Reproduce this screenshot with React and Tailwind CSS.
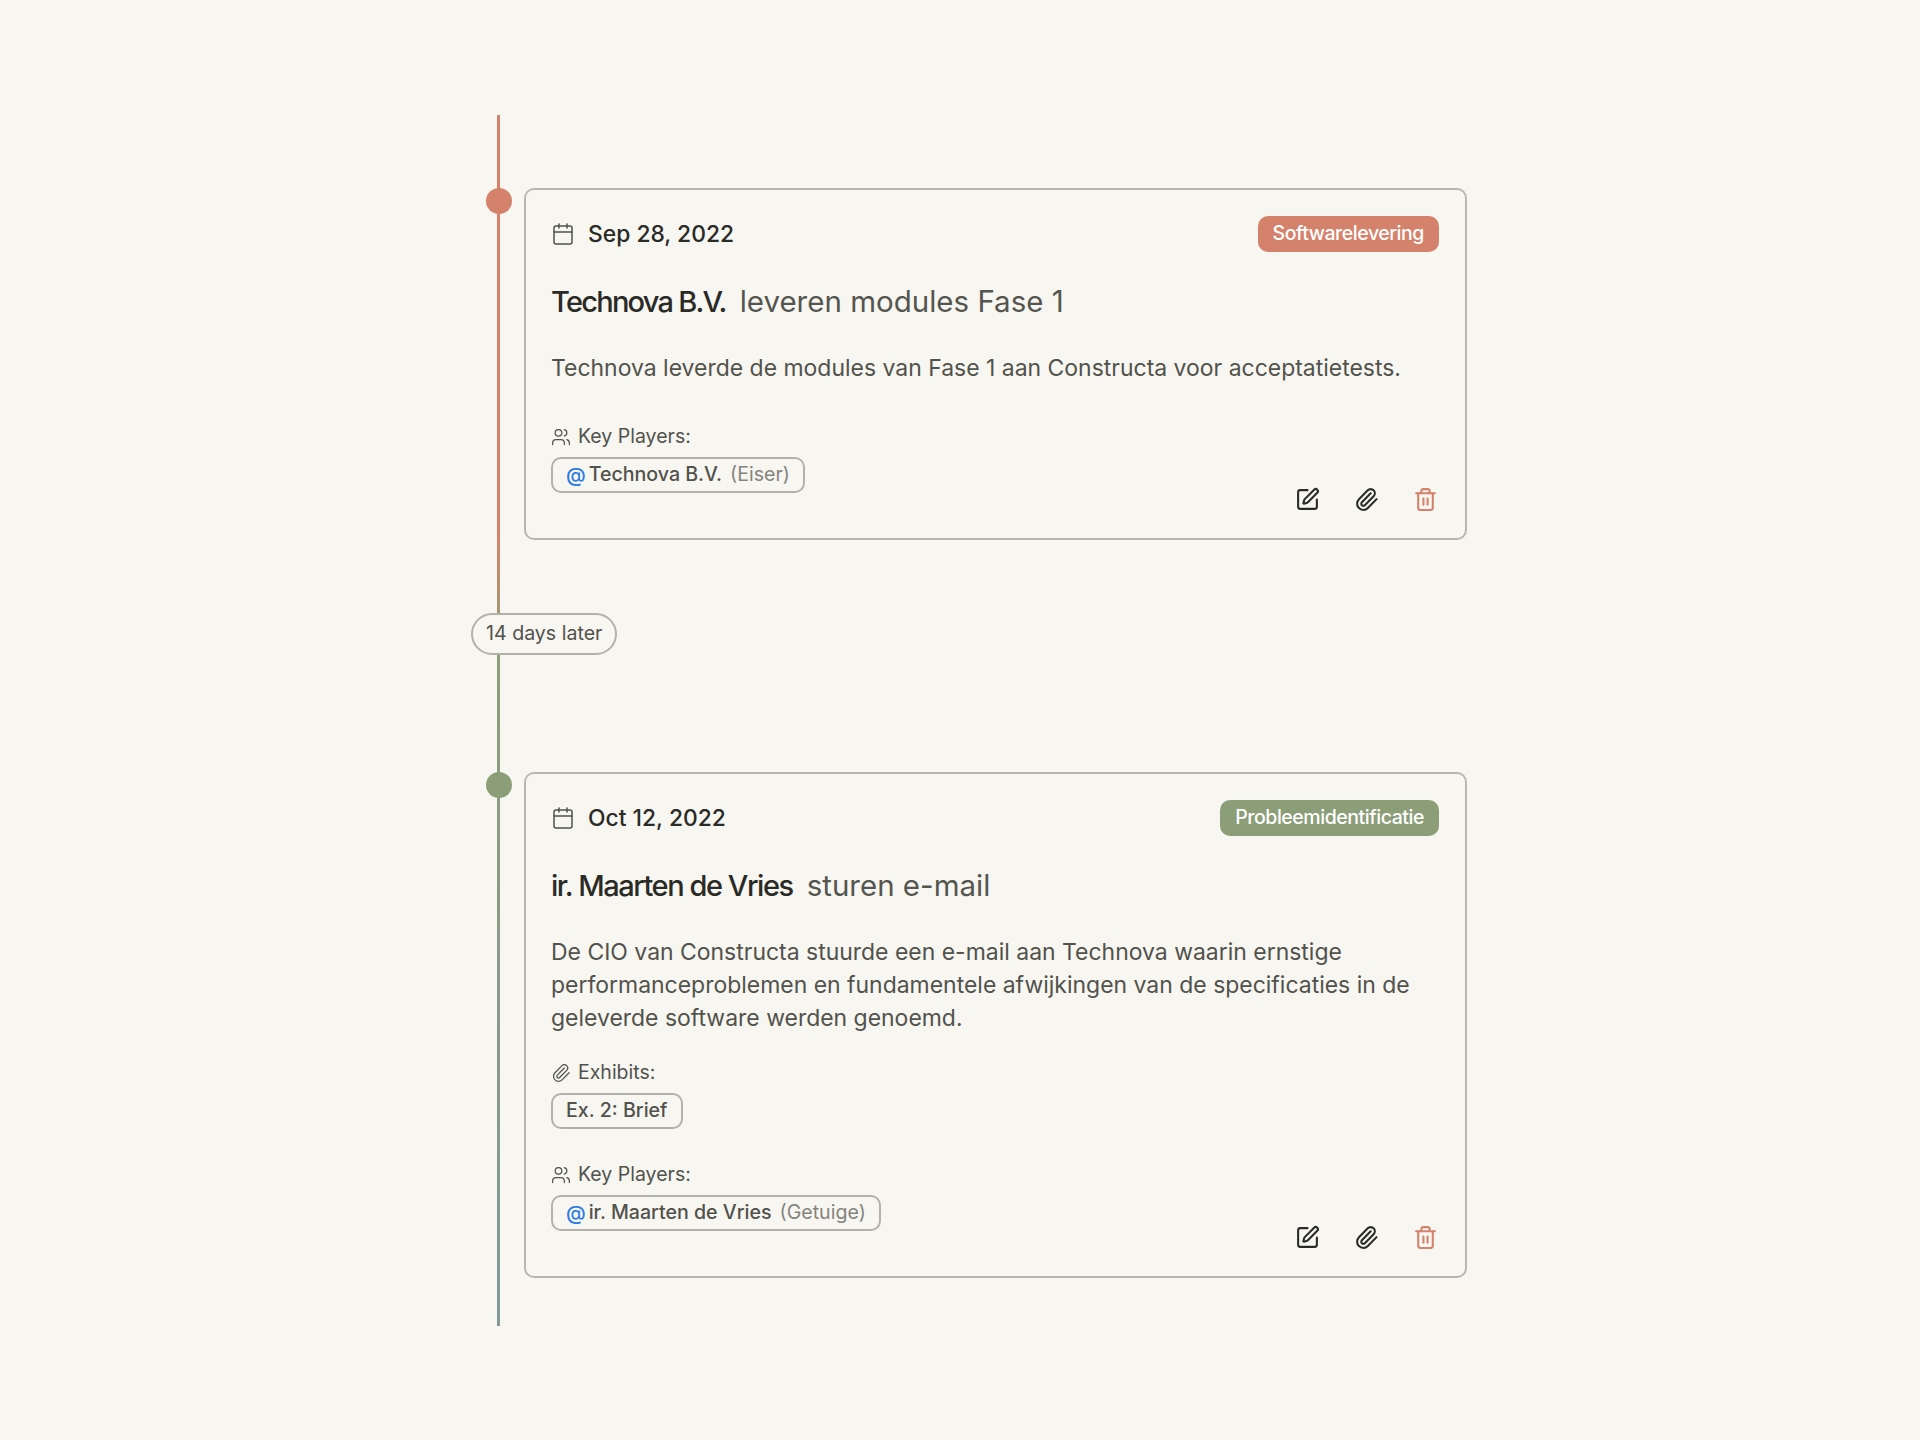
import React from "react";
import { Calendar, SquarePen, Paperclip, Trash2, Users } from "lucide-react";

const font = { fontFamily: '"Inter", "Liberation Sans", sans-serif' };

function Label({ icon: Icon, children }) {
  return (
    <div className="flex items-center gap-[7px] h-[28px] text-[19.5px] text-[#52524c]">
      <Icon size={20} strokeWidth={1.5} />
      <span>{children}</span>
    </div>
  );
}

function Chip({ children }) {
  return (
    <div className="inline-flex items-center h-[36px] px-[13px] rounded-[10px] border-2 border-[#b3b2aa] text-[19.6px] font-medium text-[#52524c] mt-[6px]">
      {children}
    </div>
  );
}

function Player({ name, role }) {
  return (
    <Chip>
      <span className="text-[#2b7be4] mr-[3px] text-[20px]">@</span>
      <span>{name}</span>
      <span className="ml-[8px] font-normal text-[#85847d]">({role})</span>
    </Chip>
  );
}

function Card({ date, badge, badgeColor, who, whoClass, what, children, extra }) {
  return (
    <div className="relative">
      <div className={"absolute left-[-38px] top-0 w-[26px] h-[26px] rounded-full " + badgeColor} />
      <div className="border-2 border-[#b8b7af] rounded-[10px] pl-[25px] pr-[26px] pt-[26px] pb-[26px]">
        <div className="flex items-center justify-between h-[36px]">
          <div className="flex items-center gap-[13px] text-[22.85px] font-medium text-[#2a2a26]">
            <Calendar size={24} strokeWidth={1.5} className="text-[#52524c]" />
            <span>{date}</span>
          </div>
          <span className={"flex items-center h-[36px] px-[15px] rounded-[10px] text-[19.5px] tracking-[-0.45px] font-medium text-white " + badgeColor}>
            {badge}
          </span>
        </div>
        <div className="flex items-baseline gap-[14px] mt-[27px] text-[29.5px] leading-[45px]">
          <span className={"font-medium text-[29px] text-[#2a2a26] " + whoClass}>{who}</span>
          <span className="text-[#55554f]">{what}</span>
        </div>
        <p className="mt-[28px] min-h-[47px] text-[22.96px] leading-[33px] text-[#52524c]">{children}</p>
        <div className="flex items-end justify-between mt-[24px]">
          <div className="flex flex-col gap-[32px] mb-[19px]">{extra}</div>
          <div className="flex items-center gap-[34px] mr-[1px]">
            <SquarePen size={25} strokeWidth={2} className="text-[#2a2a26]" />
            <Paperclip size={25} strokeWidth={2} className="text-[#2a2a26]" />
            <Trash2 size={25} strokeWidth={2} className="text-[#d4826c]" />
          </div>
        </div>
      </div>
    </div>
  );
}

export default function App() {
  return (
    <div className="min-h-[1440px] bg-[#f7f6f1] pt-[115px]" style={font}>
      <div className="relative mx-auto w-[1014px] pl-[71px] pb-[48px]">
        <div className="absolute left-[44px] top-0 bottom-0 w-[3px] bg-linear-to-b from-[#d4826c] from-[34%] via-[#8b9e78] via-[45%] to-[#84999a] to-[100%]" />
        <div className="pt-[73px]">
          <Card
            date="Sep 28, 2022"
            badge="Softwarelevering"
            badgeColor="bg-[#d4826c]"
            who="Technova B.V."
            whoClass="tracking-[-1.75px]"
            what="leveren modules Fase 1"
            extra={
              <div>
                <Label icon={Users}>Key Players:</Label>
                <Player name="Technova B.V." role="Eiser" />
              </div>
            }
          >
            Technova leverde de modules van Fase 1 aan Constructa voor acceptatietests.
          </Card>
        </div>
        <div className="relative ml-[-53px] mt-[73px] mb-[117px] w-fit">
          <div className="flex items-center h-[42px] px-[13px] rounded-full border-2 border-[#b3b2aa] bg-[#f7f6f1] text-[19.6px] text-[#52524c]">
            14 days later
          </div>
        </div>
        <Card
          date="Oct 12, 2022"
          badge="Probleemidentificatie"
          badgeColor="bg-[#8b9e78]"
          who="ir. Maarten de Vries"
          whoClass="tracking-[-1.45px]"
          what="sturen e-mail"
          extra={
            <>
              <div>
                <Label icon={Paperclip}>Exhibits:</Label>
                <Chip>Ex. 2: Brief</Chip>
              </div>
              <div>
                <Label icon={Users}>Key Players:</Label>
                <Player name="ir. Maarten de Vries" role="Getuige" />
              </div>
            </>
          }
        >
          De CIO van Constructa stuurde een e-mail aan Technova waarin ernstige performanceproblemen en fundamentele afwijkingen van de specificaties in de geleverde software werden genoemd.
        </Card>
      </div>
    </div>
  );
}
